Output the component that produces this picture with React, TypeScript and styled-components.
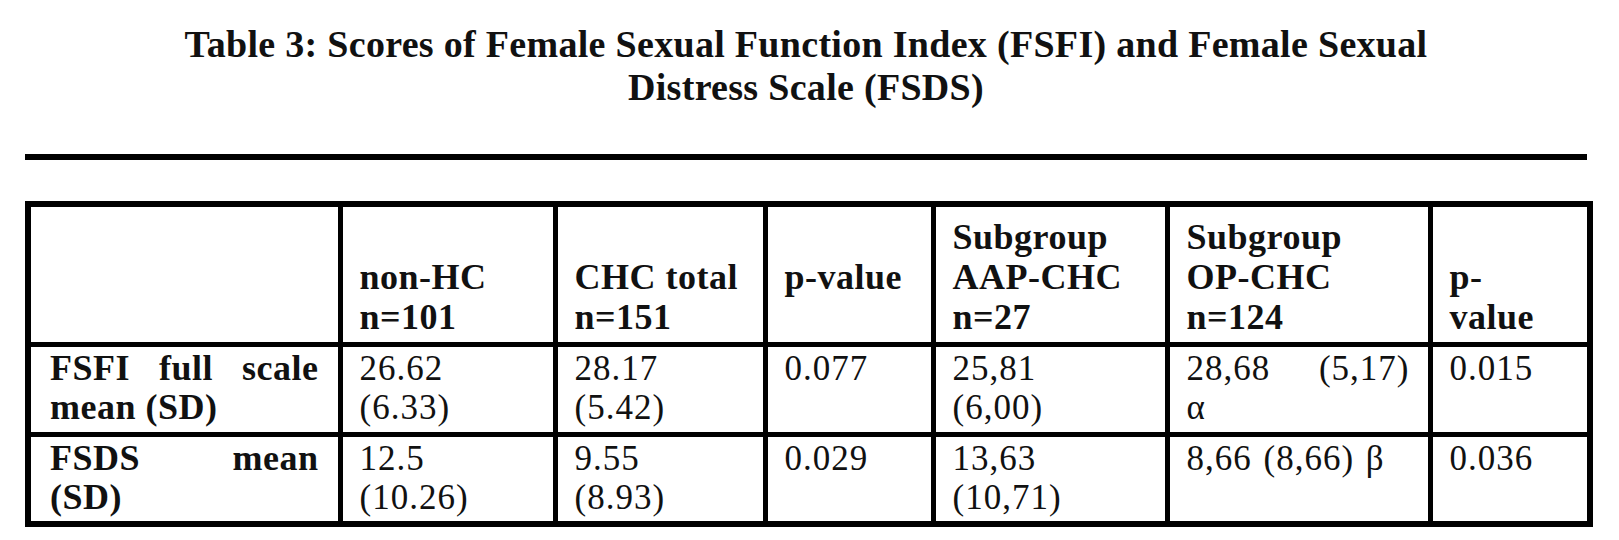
import styled, { createGlobalStyle } from "styled-components";

const GlobalStyle = createGlobalStyle`
  body {
    margin: 0;
    background: #fff;
    color: #111;
    font-family: "Liberation Serif", "Times New Roman", serif;
  }
`;

const Page = styled.div`
  width: 1562px;
  padding: 23px 0 0 25px;
`;

const Title = styled.h1`
  margin: 0;
  text-align: center;
  font-size: 38px;
  line-height: 43px;
  font-weight: 700;
  letter-spacing: 0.3px;
`;

const Rule = styled.hr`
  margin: 45px 0 0;
  border: 0;
  height: 6px;
  background: #000;
`;

const Table = styled.table`
  margin-top: 41px;
  width: 1562px;
  table-layout: fixed;
  border-collapse: collapse;
  border: 6px solid #000;
`;

const HeadRow = styled.tr`
  height: 140px;
`;

const BodyRow = styled.tr`
  height: 90px;
`;

const HeadCell = styled.th<{ $lift?: boolean }>`
  border: 5px solid #000;
  padding: 0 12px ${(p) => (p.$lift ? "45px" : "5px")} 17px;
  vertical-align: bottom;
  text-align: left;
  white-space: nowrap;
  font-size: 36px;
  line-height: 40px;
  font-weight: 700;
  letter-spacing: 0.5px;
`;

const LabelCell = styled.td`
  border: 5px solid #000;
  padding: 2px 19px 0 19px;
  vertical-align: top;
  font-size: 36px;
  line-height: 39px;
  font-weight: 700;
  letter-spacing: 0.5px;
`;

const DataCell = styled.td`
  border: 5px solid #000;
  padding: 2px 18px 0 17px;
  vertical-align: top;
  font-size: 35px;
  line-height: 39px;
  letter-spacing: 1px;
  word-spacing: 2px;
`;

const Spread = styled.div`
  text-align: justify;
  text-align-last: justify;
`;

const widths = [312, 215, 210, 168, 234, 263, 160];

export default function App() {
  return (
    <Page>
      <GlobalStyle />
      <Title>
        Table 3: Scores of Female Sexual Function Index (FSFI) and Female Sexual
        <br />
        Distress Scale (FSDS)
      </Title>
      <Rule />
      <Table>
        <colgroup>
          {widths.map((w, i) => (
            <col key={i} style={{ width: w }} />
          ))}
        </colgroup>
        <tbody>
          <HeadRow>
            <HeadCell />
            <HeadCell>
              non-HC
              <br />
              n=101
            </HeadCell>
            <HeadCell>
              CHC total
              <br />
              n=151
            </HeadCell>
            <HeadCell $lift>p-value</HeadCell>
            <HeadCell>
              Subgroup
              <br />
              AAP-CHC
              <br />
              n=27
            </HeadCell>
            <HeadCell>
              Subgroup
              <br />
              OP-CHC
              <br />
              n=124
            </HeadCell>
            <HeadCell>
              p-
              <br />
              value
            </HeadCell>
          </HeadRow>
          <BodyRow>
            <LabelCell>
              <Spread>FSFI full scale</Spread>
              mean (SD)
            </LabelCell>
            <DataCell>
              26.62
              <br />
              (6.33)
            </DataCell>
            <DataCell>
              28.17
              <br />
              (5.42)
            </DataCell>
            <DataCell>0.077</DataCell>
            <DataCell>
              25,81
              <br />
              (6,00)
            </DataCell>
            <DataCell>
              <Spread>28,68 (5,17)</Spread>α
            </DataCell>
            <DataCell>0.015</DataCell>
          </BodyRow>
          <BodyRow>
            <LabelCell>
              <Spread>FSDS mean</Spread>
              (SD)
            </LabelCell>
            <DataCell>
              12.5
              <br />
              (10.26)
            </DataCell>
            <DataCell>
              9.55
              <br />
              (8.93)
            </DataCell>
            <DataCell>0.029</DataCell>
            <DataCell>
              13,63
              <br />
              (10,71)
            </DataCell>
            <DataCell>8,66 (8,66) β</DataCell>
            <DataCell>0.036</DataCell>
          </BodyRow>
        </tbody>
      </Table>
    </Page>
  );
}
